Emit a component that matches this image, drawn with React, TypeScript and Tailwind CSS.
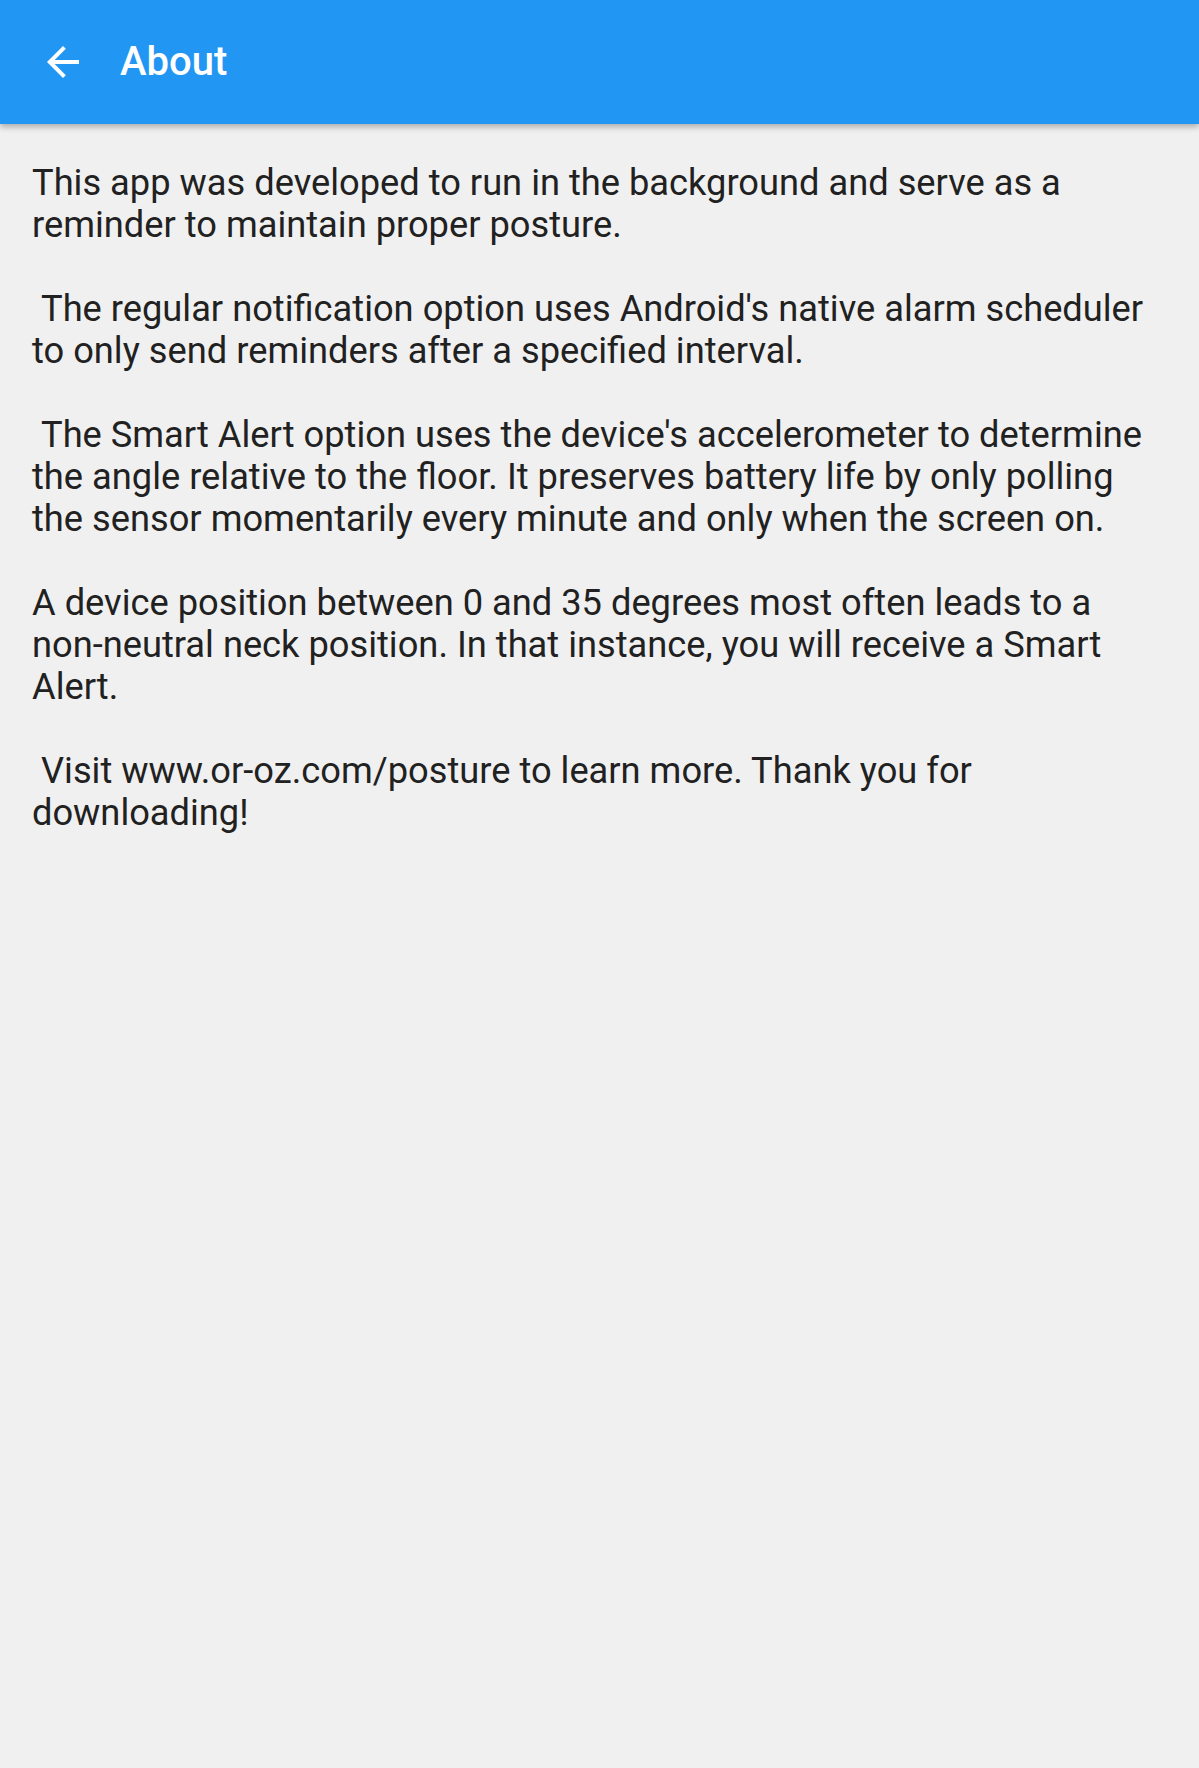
const paragraphs = [
  "This app was developed to run in the background and serve as a reminder to maintain proper posture.",
  " The regular notification option uses Android's native alarm scheduler to only send reminders after a specified interval.",
  " The Smart Alert option uses the device's accelerometer to determine the angle relative to the floor. It preserves battery life by only polling the sensor momentarily every minute and only when the screen on.",
  "A device position between 0 and 35 degrees most often leads to a non-neutral neck position. In that instance, you will receive a Smart Alert.",
  " Visit www.or-oz.com/posture to learn more. Thank you for downloading!",
];

export default function App() {
  return (
    <div
      className="min-h-[1768px] w-full bg-[#f0f0f0]"
      style={{ fontFamily: "Roboto, 'Noto Sans', sans-serif" }}
    >
      <header className="relative z-10 flex h-[124px] items-center bg-[#2196f3] pl-[39px] shadow-[0_3px_6px_rgba(0,0,0,0.28)]">
        <svg viewBox="0 0 24 24" className="h-12 w-12 fill-white">
          <path d="M20 11H7.83l5.59-5.59L12 4l-8 8 8 8 1.41-1.41L7.83 13H20v-2z" />
        </svg>
        <h1 className="ml-[33px] text-[40px] font-medium leading-none text-white">About</h1>
      </header>

      <main className="pl-8 pr-[44px] pt-[38px]">
        <p className="whitespace-pre-wrap text-[36.25px] leading-[42px] text-[#212121]">
          {paragraphs.join("\n\n").replace("non-neutral", "non\u2011neutral")}
        </p>
      </main>
    </div>
  );
}
